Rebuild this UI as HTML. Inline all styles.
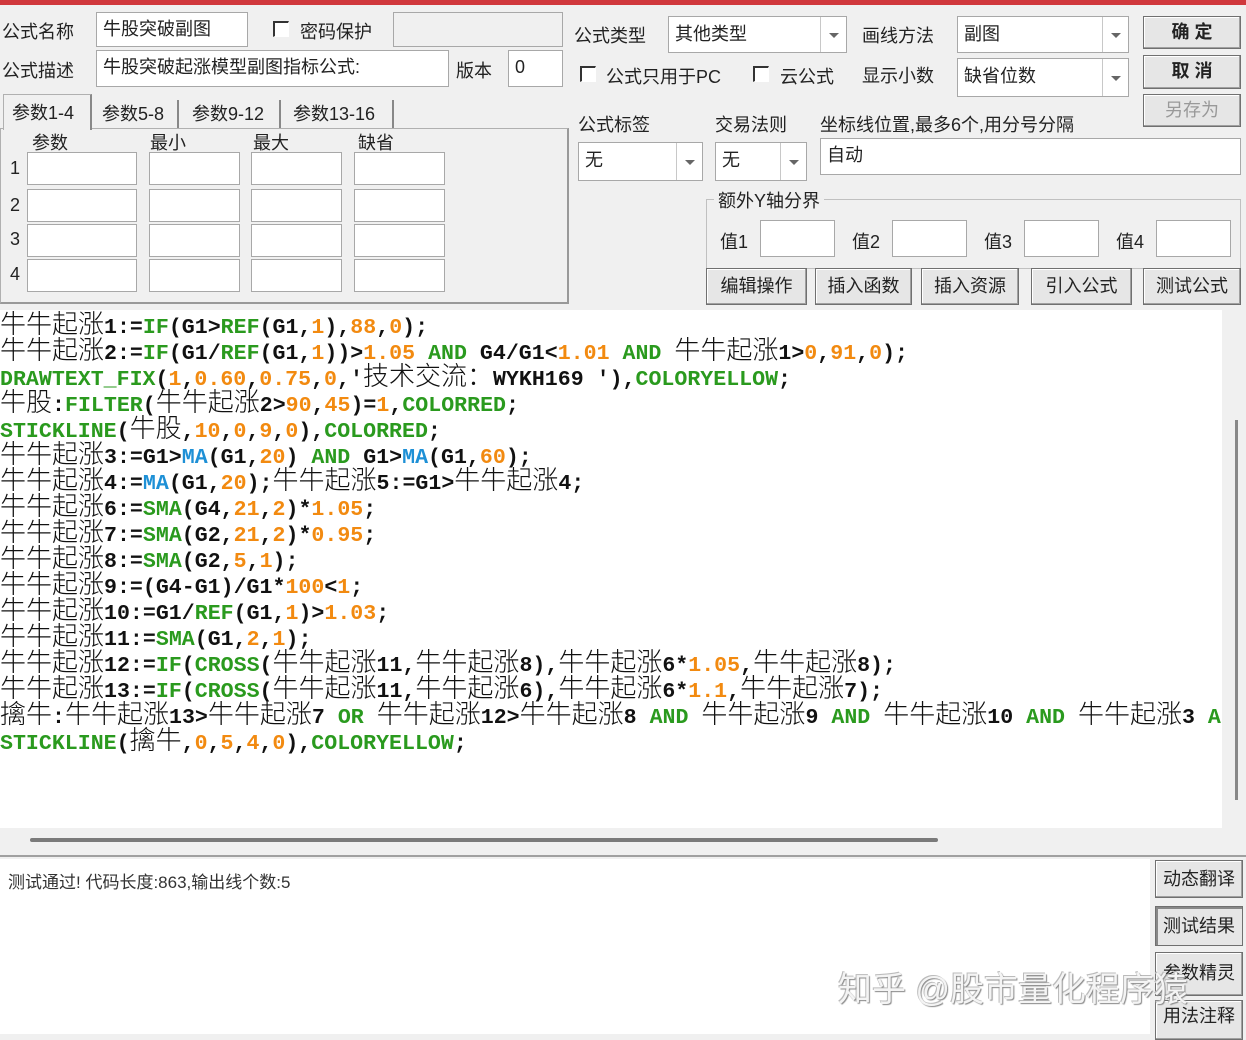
<!DOCTYPE html>
<html><head><meta charset="utf-8"><style>
*{margin:0;padding:0;box-sizing:border-box}
body{width:1246px;height:1034px;background:#f0f0f0;position:relative;overflow:hidden;font-family:"Liberation Sans","Noto Sans CJK SC",sans-serif;font-size:18px;color:#222}
.a{position:absolute;white-space:nowrap}
.in{position:absolute;background:#fff;border:1px solid #a8a8a8;padding:4px 6px;font-size:18px;line-height:24px}
.dis{background:#f0f0f0}
.cb{position:absolute;width:16px;height:16px;border-top:2px solid #333;border-left:2px solid #333;border-right:1px solid #fff;border-bottom:1px solid #fff;background:#fff}
.cmb{position:absolute;background:#fff;border:1px solid #a8a8a8;padding:4px 6px;font-size:18px;line-height:26px}
.cmb i{position:absolute;right:0;top:0;bottom:0;width:26px;border-left:1px solid #c8c8c8}
.cmb i:after{content:"";position:absolute;left:8px;top:50%;margin-top:-2px;border:5px solid transparent;border-top:5px solid #666}
.btn{position:absolute;background:#e6e6e6;border:1px solid #707070;box-shadow:inset -1px -1px 0 #a0a0a0,inset 1px 1px 0 #fff;text-align:center;font-size:18px}
.code{position:absolute;left:0;top:310px;width:1222px;height:518px;background:#fff;overflow:hidden;padding-top:0}
.code div{height:26px;line-height:26px;white-space:nowrap;font-family:"Liberation Mono",monospace;font-weight:bold;font-size:21.6px;color:#111}
.c{font-family:"Noto Sans CJK SC",sans-serif;font-weight:300;font-size:26px;letter-spacing:0}
.g{color:#2a9a1e}.o{color:#f28a10}.b{color:#1e90d6}
</style></head><body>
<div class="a" style="left:0;top:0;width:1246px;height:5px;background:#d0383c"></div>

<div class="a" style="left:2px;top:18px">公式名称</div>
<div class="in" style="left:96px;top:12px;width:152px;height:35px">牛股突破副图</div>
<div class="cb" style="left:273px;top:21px"></div>
<div class="a" style="left:300px;top:18px">密码保护</div>
<div class="in dis" style="left:393px;top:12px;width:170px;height:35px"></div>
<div class="a" style="left:2px;top:57px">公式描述</div>
<div class="in" style="left:96px;top:50px;width:353px;height:37px">牛股突破起涨模型副图指标公式:</div>
<div class="a" style="left:456px;top:57px">版本</div>
<div class="in" style="left:508px;top:50px;width:55px;height:37px">0</div>

<div class="a" style="left:0;top:128px;width:569px;height:176px;border:1px solid #b0b0b0;border-right:2px solid #999;border-bottom:2px solid #999"></div>
<div class="a" style="left:3px;top:94px;width:89px;height:36px;background:#f0f0f0;border:1px solid #b0b0b0;border-bottom:none;border-right:2px solid #888;padding:4px 0 0 8px">参数1-4</div>
<div class="a" style="left:95px;top:100px;width:84px;height:28px;border-right:2px solid #888;padding:0 0 0 7px">参数5-8</div>
<div class="a" style="left:184px;top:100px;width:97px;height:28px;border-right:2px solid #888;padding:0 0 0 8px">参数9-12</div>
<div class="a" style="left:287px;top:100px;width:107px;height:28px;border-right:2px solid #888;padding:0 0 0 6px">参数13-16</div>
<div class="a" style="left:32px;top:129px">参数</div>
<div class="a" style="left:150px;top:129px">最小</div>
<div class="a" style="left:253px;top:129px">最大</div>
<div class="a" style="left:358px;top:129px">缺省</div>
<div class="a" style="left:10px;top:158px">1</div>
<div class="a" style="left:10px;top:195px">2</div>
<div class="a" style="left:10px;top:229px">3</div>
<div class="a" style="left:10px;top:264px">4</div>
<div class="in" style="left:27px;top:152px;width:110px;height:33px"></div><div class="in" style="left:149px;top:152px;width:91px;height:33px"></div><div class="in" style="left:251px;top:152px;width:91px;height:33px"></div><div class="in" style="left:354px;top:152px;width:91px;height:33px"></div>
<div class="in" style="left:27px;top:189px;width:110px;height:33px"></div><div class="in" style="left:149px;top:189px;width:91px;height:33px"></div><div class="in" style="left:251px;top:189px;width:91px;height:33px"></div><div class="in" style="left:354px;top:189px;width:91px;height:33px"></div>
<div class="in" style="left:27px;top:224px;width:110px;height:33px"></div><div class="in" style="left:149px;top:224px;width:91px;height:33px"></div><div class="in" style="left:251px;top:224px;width:91px;height:33px"></div><div class="in" style="left:354px;top:224px;width:91px;height:33px"></div>
<div class="in" style="left:27px;top:259px;width:110px;height:33px"></div><div class="in" style="left:149px;top:259px;width:91px;height:33px"></div><div class="in" style="left:251px;top:259px;width:91px;height:33px"></div><div class="in" style="left:354px;top:259px;width:91px;height:33px"></div>

<div class="a" style="left:574px;top:22px">公式类型</div>
<div class="cmb" style="left:668px;top:16px;width:179px;height:37px">其他类型<i></i></div>
<div class="a" style="left:862px;top:22px">画线方法</div>
<div class="cmb" style="left:957px;top:16px;width:172px;height:37px">副图<i></i></div>
<div class="btn" style="left:1143px;top:16px;width:98px;height:33px;line-height:30px;font-weight:bold">确 定</div>
<div class="btn" style="left:1143px;top:55px;width:98px;height:34px;line-height:31px;font-weight:bold">取 消</div>
<div class="btn" style="left:1143px;top:94px;width:98px;height:33px;line-height:30px;color:#999">另存为</div>
<div class="cb" style="left:580px;top:66px"></div>
<div class="a" style="left:606px;top:63px">公式只用于PC</div>
<div class="cb" style="left:753px;top:66px"></div>
<div class="a" style="left:780px;top:63px">云公式</div>
<div class="a" style="left:862px;top:62px">显示小数</div>
<div class="cmb" style="left:957px;top:58px;width:172px;height:39px">缺省位数<i></i></div>

<div class="a" style="left:578px;top:111px">公式标签</div>
<div class="a" style="left:715px;top:111px">交易法则</div>
<div class="a" style="left:820px;top:111px">坐标线位置,最多6个,用分号分隔</div>
<div class="cmb" style="left:578px;top:142px;width:125px;height:39px">无<i></i></div>
<div class="cmb" style="left:715px;top:142px;width:92px;height:39px">无<i></i></div>
<div class="in" style="left:820px;top:138px;width:421px;height:37px">自动</div>

<div class="a" style="left:706px;top:199px;width:535px;height:70px;border:1px solid #c0c0c0"></div>
<div class="a" style="left:714px;top:187px;background:#f0f0f0;padding:0 4px">额外Y轴分界</div>
<div class="a" style="left:720px;top:228px">值1</div><div class="in" style="left:760px;top:220px;width:75px;height:37px"></div>
<div class="a" style="left:852px;top:228px">值2</div><div class="in" style="left:892px;top:220px;width:75px;height:37px"></div>
<div class="a" style="left:984px;top:228px">值3</div><div class="in" style="left:1024px;top:220px;width:75px;height:37px"></div>
<div class="a" style="left:1116px;top:228px">值4</div><div class="in" style="left:1156px;top:220px;width:75px;height:37px"></div>

<div class="btn" style="left:706px;top:268px;width:101px;height:37px;line-height:34px">编辑操作</div>
<div class="btn" style="left:815px;top:268px;width:97px;height:37px;line-height:34px">插入函数</div>
<div class="btn" style="left:921px;top:268px;width:98px;height:37px;line-height:34px">插入资源</div>
<div class="btn" style="left:1031px;top:268px;width:101px;height:37px;line-height:34px">引入公式</div>
<div class="btn" style="left:1143px;top:268px;width:98px;height:37px;line-height:34px">测试公式</div>

<div class="code">
<div><span class="c">牛牛起涨</span>1:=<span class="g">IF</span>(G1&gt;<span class="g">REF</span>(G1,<span class="o">1</span>),<span class="o">88</span>,<span class="o">0</span>);</div>
<div><span class="c">牛牛起涨</span>2:=<span class="g">IF</span>(G1/<span class="g">REF</span>(G1,<span class="o">1</span>))&gt;<span class="o">1.05</span> <span class="g">AND</span> G4/G1&lt;<span class="o">1.01</span> <span class="g">AND</span> <span class="c">牛牛起涨</span>1&gt;<span class="o">0</span>,<span class="o">91</span>,<span class="o">0</span>);</div>
<div><span class="g">DRAWTEXT_FIX</span>(<span class="o">1</span>,<span class="o">0.60</span>,<span class="o">0.75</span>,<span class="o">0</span>,'<span class="c">技术交流：</span>WYKH169 '),<span class="g">COLORYELLOW</span>;</div>
<div><span class="c">牛股</span>:<span class="g">FILTER</span>(<span class="c">牛牛起涨</span>2&gt;<span class="o">90</span>,<span class="o">45</span>)=<span class="o">1</span>,<span class="g">COLORRED</span>;</div>
<div><span class="g">STICKLINE</span>(<span class="c">牛股</span>,<span class="o">10</span>,<span class="o">0</span>,<span class="o">9</span>,<span class="o">0</span>),<span class="g">COLORRED</span>;</div>
<div><span class="c">牛牛起涨</span>3:=G1&gt;<span class="b">MA</span>(G1,<span class="o">20</span>) <span class="g">AND</span> G1&gt;<span class="b">MA</span>(G1,<span class="o">60</span>);</div>
<div><span class="c">牛牛起涨</span>4:=<span class="b">MA</span>(G1,<span class="o">20</span>);<span class="c">牛牛起涨</span>5:=G1&gt;<span class="c">牛牛起涨</span>4;</div>
<div><span class="c">牛牛起涨</span>6:=<span class="g">SMA</span>(G4,<span class="o">21</span>,<span class="o">2</span>)*<span class="o">1.05</span>;</div>
<div><span class="c">牛牛起涨</span>7:=<span class="g">SMA</span>(G2,<span class="o">21</span>,<span class="o">2</span>)*<span class="o">0.95</span>;</div>
<div><span class="c">牛牛起涨</span>8:=<span class="g">SMA</span>(G2,<span class="o">5</span>,<span class="o">1</span>);</div>
<div><span class="c">牛牛起涨</span>9:=(G4-G1)/G1*<span class="o">100</span>&lt;<span class="o">1</span>;</div>
<div><span class="c">牛牛起涨</span>10:=G1/<span class="g">REF</span>(G1,<span class="o">1</span>)&gt;<span class="o">1.03</span>;</div>
<div><span class="c">牛牛起涨</span>11:=<span class="g">SMA</span>(G1,<span class="o">2</span>,<span class="o">1</span>);</div>
<div><span class="c">牛牛起涨</span>12:=<span class="g">IF</span>(<span class="g">CROSS</span>(<span class="c">牛牛起涨</span>11,<span class="c">牛牛起涨</span>8),<span class="c">牛牛起涨</span>6*<span class="o">1.05</span>,<span class="c">牛牛起涨</span>8);</div>
<div><span class="c">牛牛起涨</span>13:=<span class="g">IF</span>(<span class="g">CROSS</span>(<span class="c">牛牛起涨</span>11,<span class="c">牛牛起涨</span>6),<span class="c">牛牛起涨</span>6*<span class="o">1.1</span>,<span class="c">牛牛起涨</span>7);</div>
<div><span class="c">擒牛</span>:<span class="c">牛牛起涨</span>13&gt;<span class="c">牛牛起涨</span>7 <span class="g">OR</span> <span class="c">牛牛起涨</span>12&gt;<span class="c">牛牛起涨</span>8 <span class="g">AND</span> <span class="c">牛牛起涨</span>9 <span class="g">AND</span> <span class="c">牛牛起涨</span>10 <span class="g">AND</span> <span class="c">牛牛起涨</span>3 <span class="g">AND</span></div>
<div><span class="g">STICKLINE</span>(<span class="c">擒牛</span>,<span class="o">0</span>,<span class="o">5</span>,<span class="o">4</span>,<span class="o">0</span>),<span class="g">COLORYELLOW</span>;</div>
</div>
<div class="a" style="left:1235px;top:420px;width:3px;height:380px;background:#888"></div>
<div class="a" style="left:30px;top:838px;width:908px;height:4px;background:#7a7a7a;border-radius:2px"></div>
<div class="a" style="left:0;top:855px;width:1246px;height:2px;background:#a0a0a0"></div>
<div class="a" style="left:0;top:859px;width:1150px;height:175px;background:#fff"></div>
<div class="a" style="left:8px;top:868px;font-size:17px;color:#333">测试通过! 代码长度:863,输出线个数:5</div>
<div class="btn" style="left:1155px;top:860px;width:88px;height:38px;line-height:36px">动态翻译</div>
<div class="btn" style="left:1155px;top:906px;width:88px;height:40px;line-height:38px;box-shadow:inset 2px 2px 0 #888">测试结果</div>
<div class="btn" style="left:1155px;top:952px;width:88px;height:44px;line-height:40px">参数精灵</div>
<div class="btn" style="left:1155px;top:1000px;width:88px;height:40px;line-height:30px">用法注释</div>
<div class="a" style="left:838px;top:962px;font-size:34px;color:#f4f4f4;text-shadow:1px 1px 1px #888,-1px -1px 0 #bbb">知乎 @股市量化程序猿</div>
</body></html>
